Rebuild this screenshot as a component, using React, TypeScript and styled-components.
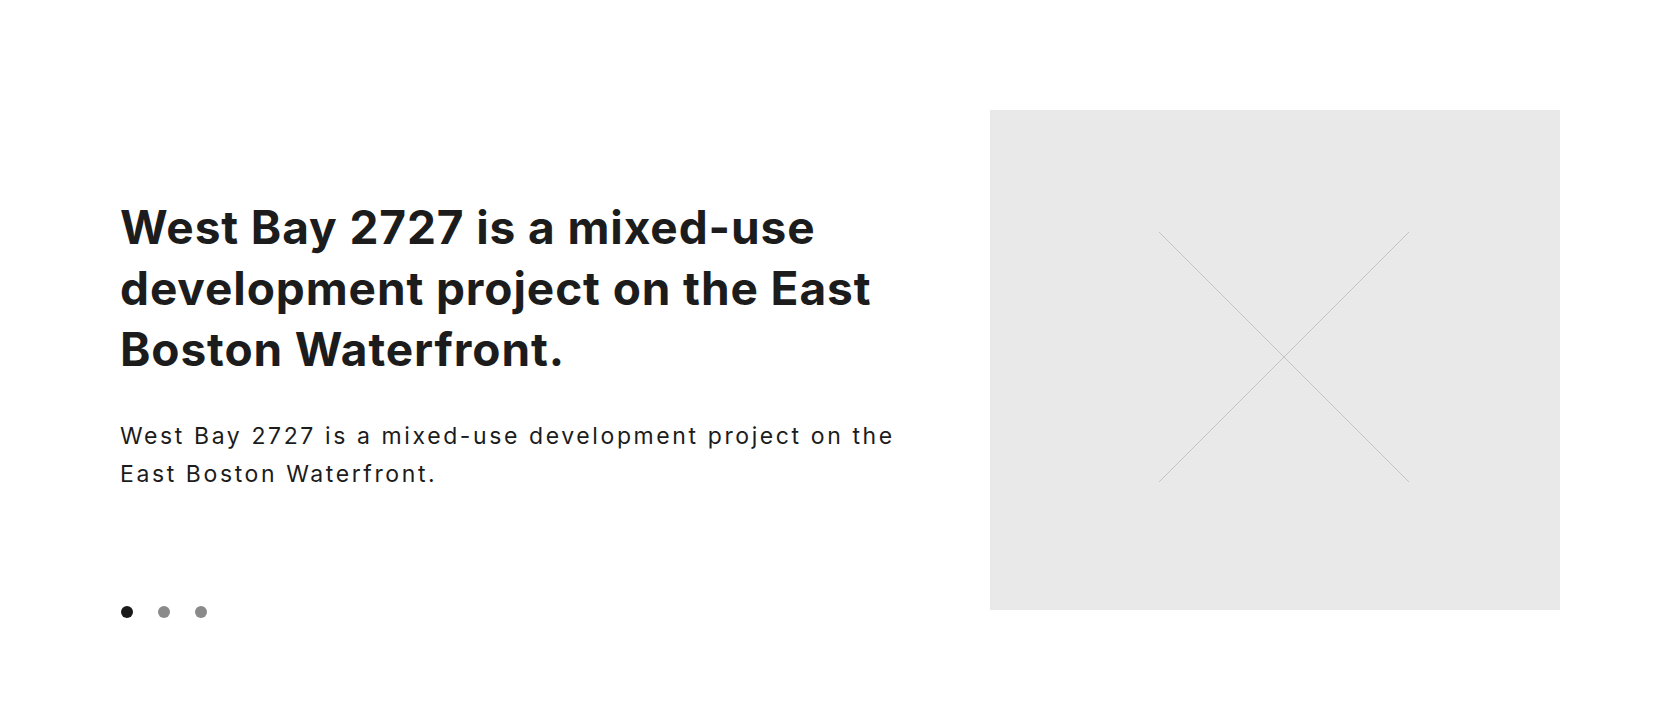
import React from "react";
import styled, { createGlobalStyle } from "styled-components";

const GlobalStyle = createGlobalStyle`
  html, body { margin: 0; padding: 0; background: #ffffff; }
  body { font-family: "Inter", "Liberation Sans", sans-serif; color: #1c1c1c; }
`;

const Section = styled.section`
  display: flex;
  justify-content: space-between;
  align-items: flex-start;
  padding: 110px 120px;
  height: 720px;
  box-sizing: border-box;
`;

const TextColumn = styled.div`
  display: flex;
  flex-direction: column;
  width: 820px;
  padding-top: 87px;
`;

const Heading = styled.h1`
  margin: 0;
  font-family: "Inter", "Liberation Sans", sans-serif;
  font-weight: 700;
  font-size: 46px;
  line-height: 61px;
  letter-spacing: 0.9px;
  color: #1c1c1c;
  max-width: 800px;
`;

const Body = styled.p`
  margin: 37px 0 0;
  font-family: "Inter", "Liberation Sans", sans-serif;
  font-weight: 400;
  font-size: 23px;
  line-height: 38px;
  letter-spacing: 2.6px;
  color: #1c1c1c;
  max-width: 805px;
`;

const Dots = styled.div`
  display: flex;
  gap: 25px;
  margin-top: 113px;
  padding-left: 1px;
`;

const Dot = styled.span<{ $active?: boolean }>`
  width: 12px;
  height: 12px;
  border-radius: 50%;
  background: ${(p) => (p.$active ? "#1a1a1a" : "#8a8a8a")};
`;

const ImageBox = styled.div`
  width: 570px;
  height: 500px;
  background: #e9e9e9;
  flex-shrink: 0;
  display: flex;
`;

export default function App() {
  const text = "West Bay 2727 is a mixed-use development project on the East Boston Waterfront.";
  return (
    <>
      <GlobalStyle />
      <Section>
        <TextColumn>
          <Heading>{text}</Heading>
          <Body>{text}</Body>
          <Dots>
            <Dot $active />
            <Dot />
            <Dot />
          </Dots>
        </TextColumn>
        <ImageBox>
          <svg width="570" height="500" viewBox="0 0 570 500">
            <line x1="169" y1="122" x2="419" y2="372" stroke="#c4c4c4" strokeWidth="1" />
            <line x1="419" y1="122" x2="169" y2="372" stroke="#c4c4c4" strokeWidth="1" />
          </svg>
        </ImageBox>
      </Section>
    </>
  );
}
